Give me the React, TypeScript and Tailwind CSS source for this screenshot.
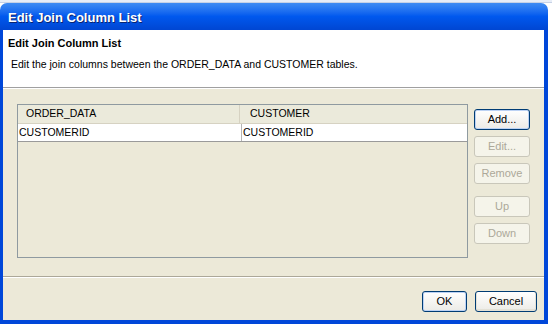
import React from "react";

const font = { fontFamily: '"Liberation Sans", Arial, sans-serif' };

function Btn({
  label,
  disabled,
  def,
  w,
}: {
  label: string;
  disabled?: boolean;
  def?: boolean;
  w: string;
}) {
  if (disabled) {
    return (
      <div
        className={`${w} h-[21px] rounded-[3px] border border-[#c9c7ba] bg-[#f5f4ea] flex items-center justify-center text-[11px] text-[#aca899]`}
      >
        {label}
      </div>
    );
  }
  return (
    <div
      className={`${w} h-[21px] rounded-[3px] border border-[#003c74] bg-gradient-to-b from-[#ffffff] to-[#ecebe6] flex items-center justify-center text-[11px] text-black ${
        def ? "shadow-[inset_0_0_0_1px_#bcd2f4]" : "shadow-[inset_0_-1px_0_1px_#e3e1d6]"
      }`}
    >
      {label}
    </div>
  );
}

export default function App() {
  return (
    <div className="w-[552px] h-[328px] bg-white overflow-hidden" style={font}>
      <div className="h-[3px] bg-[#e8eef8] border-b border-[#c7d2e6]" />
      <div className="w-[548px] h-[321px] flex flex-col">
        {/* Title bar */}
        <div className="h-[27px] rounded-t-[7px] bg-gradient-to-b from-[#3f8cf3] via-[#0058ee] to-[#0046d2] flex items-center pl-[8px] shrink-0">
          <span className="text-white font-bold text-[13px] [text-shadow:1px_1px_0_#0a2470] leading-none mt-[2px]">
            Edit Join Column List
          </span>
        </div>
        {/* Frame */}
        <div className="flex-1 border-l-[3px] border-r-[4px] border-b-[4px] border-[#0047d9] flex flex-col bg-[#ece9d8]">
          {/* Header */}
          <div className="h-[57px] bg-white flex flex-col shrink-0">
            <div className="pl-[5px] pt-[7px] text-[11px] font-bold text-black leading-[13px]">
              Edit Join Column List
            </div>
            <div className="pl-[8px] pt-[8px] text-[10.5px] text-black leading-[13px]">
              Edit the join columns between the ORDER_DATA and CUSTOMER tables.
            </div>
          </div>
          <div className="h-px bg-[#a0a0a0] shrink-0" />
          <div className="h-px bg-white shrink-0" />
          {/* Content */}
          <div className="flex pl-[14px] pt-[15px] shrink-0">
            <div className="w-[451px] h-[154px] border border-[#8f9aa0] bg-[#ece9d8] flex flex-col">
              <div className="h-[19px] flex text-[10.5px] text-black bg-[#ebeadb] border-b border-[#d6d2c2]">
                <div className="w-[222px] flex items-center pl-[8px] border-r border-[#d6d2c2]">
                  ORDER_DATA
                </div>
                <div className="flex-1 flex items-center pl-[10px]">CUSTOMER</div>
              </div>
              <div className="h-[18px] flex text-[10.5px] text-black bg-white border-b border-[#9a9a9a]">
                <div className="w-[224px] flex items-center pl-[1px] border-r border-[#b5b5b5]">
                  CUSTOMERID
                </div>
                <div className="flex-1 flex items-center pl-[1px]">CUSTOMERID</div>
              </div>
            </div>
            <div className="ml-[6px] pt-[5px] flex flex-col">
              <Btn label="Add..." def w="w-[56px]" />
              <div className="h-[6px]" />
              <Btn label="Edit..." disabled w="w-[56px]" />
              <div className="h-[6px]" />
              <Btn label="Remove" disabled w="w-[56px]" />
              <div className="h-[12px]" />
              <Btn label="Up" disabled w="w-[56px]" />
              <div className="h-[6px]" />
              <Btn label="Down" disabled w="w-[56px]" />
            </div>
          </div>
          <div className="mt-[18px] h-px bg-[#aca899] shrink-0" />
          <div className="h-px bg-white shrink-0" />
          <div className="flex justify-end pr-[7px] pt-[13px] gap-[8px]">
            <Btn label="OK" def w="w-[45px]" />
            <Btn label="Cancel" w="w-[62px]" />
          </div>
        </div>
      </div>
    </div>
  );
}
